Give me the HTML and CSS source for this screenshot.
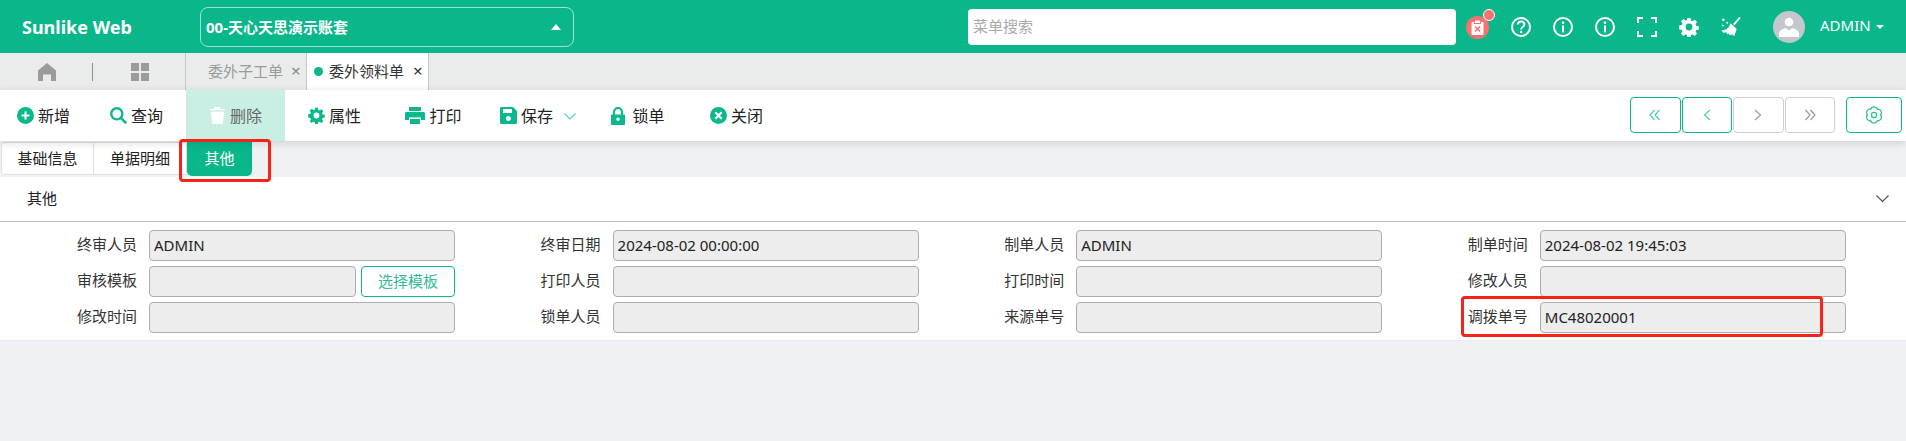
FILE: index.html
```html
<!DOCTYPE html>
<html>
<head>
<title>委外领料单</title>
<link rel="stylesheet" href="styles.css">
</head>
<body>

<svg class="sprite">
    <symbol id="cog" viewBox="0 0 20 20">
        <path d="M8.2 0h3.6l.5 2.9 1.6.7 2.5-1.7 2.5 2.6-1.6 2.4.7 1.7 2.9.5v3.6l-2.9.5-.7 1.7 1.6 2.4-2.5 2.6-2.5-1.7-1.6.7-.5 2.9H8.2l-.5-2.9-1.6-.7-2.5 1.7-2.5-2.6 1.6-2.4-.7-1.7-2.9-.5V8.3l2.9-.5.7-1.7-1.6-2.4 2.5-2.6 2.5 1.7 1.6-.7zM10 6.2a3.8 3.8 0 1 0 0 7.6 3.8 3.8 0 0 0 0-7.6z" fill-rule="evenodd" transform="translate(1 1) scale(.9)"/>
    </symbol>
    <symbol id="info" viewBox="0 0 20 20">
        <circle cx="10" cy="10" r="9" fill="none" stroke="#fff" stroke-width="2"/>
        <circle cx="10" cy="5.8" r="1.3" fill="#fff"/>
        <rect x="9" y="8.4" width="2" height="7" fill="#fff"/>
    </symbol>
</svg>

<div class="topbar">
    <div class="logo">Sunlike Web</div>
    <div class="accountSelect">
        <span>00-天心天思演示账套</span>
        <span class="upArrow"></span>
    </div>
    <div class="searchBox">菜单搜索</div>
    <div class="topIcons">
        <div class="alertIcon">
            <svg width="13" height="15" viewBox="0 0 13 15">
                <rect x="0.5" y="2" width="12" height="13" rx="1" fill="#fff"/>
                <rect x="3.5" y="0" width="6" height="3.5" fill="#fff" stroke="#f77170"/>
                <path d="M4 6.5l5 5M9 6.5l-5 5" stroke="#f77170" stroke-width="1.6"/>
            </svg>
            <span class="alertDot"></span>
        </div>
        <svg class="topIcon" viewBox="0 0 20 20">
            <circle cx="10" cy="10" r="9" fill="none" stroke="#fff" stroke-width="2"/>
            <path d="M6.8 7.6c0-4.2 6.6-4.2 6.6 0 0 2.5-3.3 2.4-3.3 4.8" fill="none" stroke="#fff" stroke-width="1.9"/>
            <circle cx="10.1" cy="15" r="1.2" fill="#fff"/>
        </svg>
        <svg class="topIcon"><use href="#info"/></svg>
        <svg class="topIcon"><use href="#info"/></svg>
        <svg class="topIcon" viewBox="0 0 20 20">
            <path d="M1 6V1h5M14 1h5v5M19 14v5h-5M6 19H1v-5" fill="none" stroke="#fff" stroke-width="2"/>
        </svg>
        <svg class="topIcon whiteFill"><use href="#cog"/></svg>
        <svg class="topIcon" viewBox="0 0 20 21">
            <path d="M19.5 0.5l-6.6 7.4" stroke="#fff" stroke-width="2"/>
            <path d="M9.5 6.5l6.5 6-2.5 7.5-3-2-1 1.5-2-2-1.5.5-1-2-3 .5-2-2.5 4-.5 3.5-2.5z" fill="#fff"/>
            <circle cx="2" cy="3" r="1.3" fill="#fff"/>
            <circle cx="6" cy="6" r="1" fill="#fff"/>
            <path d="M0 7.5l3 1.5-1.5 1.5z" fill="#fff"/>
        </svg>
    </div>
    <div class="avatar">
        <svg width="20" height="20" viewBox="0 0 20 20">
            <circle cx="10" cy="5" r="4.3" fill="#fff"/>
            <path d="M0 20v-3c0-4 4-5 6.5-6l3.5 2.5 3.5-2.5c2.5 1 6.500 2 6.500 6v3z" fill="#fff"/>
        </svg>
    </div>
    <div class="userName">ADMIN</div>
    <span class="downArrow"></span>
</div>

<div class="tabBar">
    <div class="tabTools">
        <svg width="18" height="18" viewBox="0 0 18 18">
            <path d="M9 0l9 7.5V18h-5v-6.5H5V18H0V7.5z" fill="#9b9b9b"/>
        </svg>
        <span class="tabDivider"></span>
        <svg width="18" height="18" viewBox="0 0 18 18">
            <path d="M0 0h8v8H0zM10 0h8v8h-8zM0 10h8v8H0zM10 10h8v8h-8z" fill="#9b9b9b"/>
        </svg>
    </div>
    <div class="pageTab">委外子工单<span class="tabClose">×</span></div>
    <div class="pageTab activeTab"><span class="tabDot"></span>委外领料单<span class="tabClose">×</span></div>
</div>

<div class="toolbar">
    <div class="toolBtn btnFirst">
        <svg class="toolIcon" viewBox="0 0 17 17">
            <circle cx="8.5" cy="8.5" r="8.5" fill="#09b98c"/>
            <path d="M8.5 4.500v8M4.500 8.5h8" stroke="#fff" stroke-width="2"/>
        </svg>新增
    </div>
    <div class="toolBtn">
        <svg class="toolIcon" viewBox="0 0 17 17">
            <circle cx="6.8" cy="6.8" r="5.6" fill="none" stroke="#09b98c" stroke-width="2.4"/>
            <path d="M10.8 10.8l5.4 5.4" stroke="#09b98c" stroke-width="2.6"/>
        </svg>查询
    </div>
    <div class="toolBtn disabledBtn">
        <svg class="toolIcon" viewBox="0 0 17 18">
            <path d="M5 0h6l1 2h4v1.5H1V2h4zM1.5 5h14l-1.300 12c0 .6-.5 1-1 1H3.800c-.5 0-1-.4-1-1z" fill="#fff"/>
        </svg>删除
    </div>
    <div class="toolBtn">
        <svg class="toolIcon greenFill"><use href="#cog"/></svg>属性
    </div>
    <div class="toolBtn">
        <svg class="toolIcon wideIcon" viewBox="0 0 20 17">
            <path d="M4 0h12v4H4zM1.5 5h17c.8 0 1.5.7 1.5 1.5V13h-4v-2.5H4V13H0V6.5C0 5.7.7 5 1.5 5zM5 12h10v5H5z" fill="#09b98c"/>
        </svg>打印
    </div>
    <div class="toolBtn saveBtn">
        <svg class="toolIcon" viewBox="0 0 17 17">
            <path d="M1.5 0H13l4 4v11.5c0 .8-.7 1.5-1.5 1.5h-14C.7 17 0 16.300 0 15.5v-14C0 .7.7 0 1.5 0zM3 2v4h9V2zm5.5 7a2.5 2.5 0 1 0 0 5 2.5 2.5 0 0 0 0-5z" fill="#09b98c" fill-rule="evenodd"/>
        </svg>保存
        <svg class="saveChevron" width="12" height="7" viewBox="0 0 12 7">
            <path d="M.5.5L6 6l5.5-5.5" fill="none" stroke="#5fcfb3" stroke-width="1.2"/>
        </svg>
    </div>
    <div class="toolBtn lockBtn">
        <svg class="toolIcon lockIcon" viewBox="0 0 14 18">
            <path d="M3 8V5a4 4 0 0 1 8 0v3" fill="none" stroke="#09b98c" stroke-width="2.2"/>
            <path d="M1 7.5h12c.6 0 1 .4 1 1V17c0 .6-.4 1-1 1H1c-.6 0-1-.4-1-1V8.5c0-.6.4-1 1-1zM7 10.500a1.8 1.8 0 1 0 0 3.600 1.8 1.8 0 0 0 0-3.600z" fill="#09b98c" fill-rule="evenodd"/>
        </svg>锁单
    </div>
    <div class="toolBtn closeBtn">
        <svg class="toolIcon" viewBox="0 0 17 17">
            <circle cx="8.5" cy="8.5" r="8.5" fill="#09b98c"/>
            <path d="M5.3 5.3l6.4 6.4M11.7 5.3l-6.4 6.4" stroke="#fff" stroke-width="2.2"/>
        </svg>关闭
    </div>

    <div class="pager">
        <div class="pageBtn pageOn">
            <svg width="12" height="12" viewBox="0 0 12 12"><path d="M5.5 1L1 6l4.5 5M10.5 1L6 6l4.5 5" fill="none" stroke="#4fcbac" stroke-width="1.2"/></svg>
        </div>
        <div class="pageBtn pageOn">
            <svg width="8" height="12" viewBox="0 0 8 12"><path d="M7 1L1.5 6 7 11" fill="none" stroke="#4fcbac" stroke-width="1.2"/></svg>
        </div>
        <div class="pageBtn">
            <svg width="8" height="12" viewBox="0 0 8 12"><path d="M1 1l5.5 5L1 11" fill="none" stroke="#9a9a9a" stroke-width="1.2"/></svg>
        </div>
        <div class="pageBtn">
            <svg width="12" height="12" viewBox="0 0 12 12"><path d="M1.5 1L6 6l-4.5 5M6.5 1L11 6l-4.5 5" fill="none" stroke="#9a9a9a" stroke-width="1.2"/></svg>
        </div>
    </div>
    <div class="pageBtn pageOn settingBtn">
        <svg width="18" height="18" viewBox="0 0 18 18">
            <path d="M5.7 3.28A3.5 3.5 0 0 1 12.3 3.28A3.5 3.5 0 0 1 15.6 9A3.5 3.5 0 0 1 12.3 14.72A3.5 3.5 0 0 1 5.7 14.72A3.5 3.5 0 0 1 2.4 9A3.5 3.5 0 0 1 5.7 3.28Z" fill="none" stroke="#2cc09b" stroke-width="1.3" stroke-linejoin="round"/>
            <circle cx="9" cy="9" r="2.6" fill="none" stroke="#2cc09b" stroke-width="1.3"/>
        </svg>
    </div>
</div>

<div class="subTabs">
    <div class="subTab">基础信息</div>
    <div class="subTab">单据明细</div>
    <div class="subTab subTabOn">其他</div>
</div>

<div class="sectionHead">
    <div class="sectionName">其他</div>
    <svg width="13" height="8" viewBox="0 0 13 8"><path d="M.5.5l6 6 6-6" fill="none" stroke="#555" stroke-width="1.2"/></svg>
</div>

<div class="formGrid">
    <div class="field"><div class="fieldLabel">终审人员</div><div class="fieldValue">ADMIN</div></div>
    <div class="field"><div class="fieldLabel">终审日期</div><div class="fieldValue">2024-08-02 00:00:00</div></div>
    <div class="field"><div class="fieldLabel">制单人员</div><div class="fieldValue">ADMIN</div></div>
    <div class="field"><div class="fieldLabel">制单时间</div><div class="fieldValue">2024-08-02 19:45:03</div></div>

    <div class="field"><div class="fieldLabel">审核模板</div><div class="fieldValue shortValue"></div><div class="pickBtn">选择模板</div></div>
    <div class="field"><div class="fieldLabel">打印人员</div><div class="fieldValue"></div></div>
    <div class="field"><div class="fieldLabel">打印时间</div><div class="fieldValue"></div></div>
    <div class="field"><div class="fieldLabel">修改人员</div><div class="fieldValue"></div></div>

    <div class="field"><div class="fieldLabel">修改时间</div><div class="fieldValue"></div></div>
    <div class="field"><div class="fieldLabel">锁单人员</div><div class="fieldValue"></div></div>
    <div class="field"><div class="fieldLabel">来源单号</div><div class="fieldValue"></div></div>
    <div class="field"><div class="fieldLabel">调拨单号</div><div class="fieldValue">MC48020001</div></div>
</div>

<div class="redMark markTab"></div>
<div class="redMark markField"></div>

</body>
</html>
```

FILE: styles.css
```css
body{
    margin:0;
    height:441px;
    overflow:hidden;
    position:relative;
    font-family:"Noto Sans","Noto Sans CJK SC",sans-serif;
    font-size:15px;
    color:#222;
    background:#f0f1f5;
}
.sprite{
    width:0;
    height:0;
    position:absolute;
}
.topbar{
    height:53px;
    background:#09b78b;
    display:flex;
    align-items:center;
    color:white;
}
.logo{
    width:200px;
    padding-left:22px;
    box-sizing:border-box;
    font-size:18px;
    font-weight:bold;
}
.accountSelect{
    width:374px;
    height:40px;
    border:1px solid rgba(255,255,255,0.6);
    border-radius:8px;
    box-sizing:border-box;
    display:flex;
    align-items:center;
    justify-content:space-between;
    padding:0 12px 0 5px;
    font-size:15px;
    font-weight:bold;
}
.upArrow{
    width:0;
    height:0;
    border-left:5px solid transparent;
    border-right:5px solid transparent;
    border-bottom:6px solid white;
}
.searchBox{
    width:488px;
    height:36px;
    margin-left:394px;
    background:white;
    border-radius:4px;
    display:flex;
    align-items:center;
    padding:0 0 2px 5px;
    box-sizing:border-box;
    color:#aaa;
    font-size:15px;
}
.topIcons{
    display:flex;
    align-items:center;
    gap:22px;
    margin-left:10px;
}
.alertIcon{
    width:23px;
    height:23px;
    border-radius:50%;
    background:#f77170;
    display:flex;
    align-items:center;
    justify-content:center;
    position:relative;
    margin-top:1px;
}
.alertDot{
    position:absolute;
    top:-7px;
    right:-6px;
    width:10px;
    height:10px;
    border-radius:50%;
    background:#f77170;
    border:1px solid white;
}
.topIcon{
    width:20px;
    height:20px;
}
.whiteFill{
    fill:white;
}
.avatar{
    width:32px;
    height:32px;
    margin-left:32px;
    border-radius:50%;
    background:#c4c7cf;
    display:flex;
    align-items:center;
    justify-content:center;
    overflow:hidden;
}
.userName{
    margin-left:15px;
    padding-bottom:3px;
    font-size:15px;
}
.downArrow{
    margin-left:5px;
    width:0;
    height:0;
    border-left:4px solid transparent;
    border-right:4px solid transparent;
    border-top:4px solid white;
}
.tabBar{
    height:37px;
    background:#e9ecea;
    display:flex;
}
.tabTools{
    width:186px;
    box-sizing:border-box;
    display:flex;
    align-items:center;
    padding-left:38px;
    border-right:1px solid #c6c8c8;
}
.tabDivider{
    width:1px;
    height:18px;
    background:#8f8f8f;
    margin:0 38px 0 36px;
}
.pageTab{
    width:121px;
    box-sizing:border-box;
    display:flex;
    align-items:center;
    padding:0 0 2px 22px;
    color:#9a9a9a;
    font-size:15px;
    border-right:1px solid #c6c8c8;
}
.tabClose{
    margin-left:8px;
    font-size:17px;
    color:#888;
}
.activeTab{
    width:122px;
    background:white;
    color:#333;
    padding-left:7px;
}
.activeTab .tabClose{
    color:#333;
    margin-left:9px;
}
.tabDot{
    width:9px;
    height:9px;
    border-radius:50%;
    background:#09b78b;
    margin:2px 6px 0 0;
}
.toolbar{
    height:51px;
    background:white;
    display:flex;
    align-items:stretch;
    position:relative;
    z-index:2;
    box-shadow:0 2px 8px rgba(0,0,0,0.14);
    font-size:16px;
}
.toolBtn{
    width:99px;
    display:flex;
    align-items:center;
    justify-content:center;
    gap:4px;
    padding-bottom:2px;
    box-sizing:border-box;
    color:#222;
}
.btnFirst{
    width:87px;
}
.saveBtn{
    width:110px;
}
.lockBtn{
    width:90px;
}
.closeBtn{
    width:107px;
}
.disabledBtn{
    background:#c9efe5;
    color:#666;
}
.toolIcon{
    width:17px;
    height:17px;
    flex:none;
    margin-top:2px;
}
.wideIcon{
    width:20px;
}
.lockIcon{
    width:14px;
    height:18px;
    margin-right:3px;
}
.greenFill{
    fill:#09b98c;
}
.saveChevron{
    margin:4px 0 0 7px;
}
.pager{
    width:205px;
    display:flex;
    gap:1px;
    margin:7px 0 7px auto;
}
.pageBtn{
    flex:1;
    height:36px;
    box-sizing:border-box;
    border:1px solid #cfcfcf;
    border-radius:4px;
    display:flex;
    align-items:center;
    justify-content:center;
}
.pageOn{
    border-color:#09b78b;
}
.settingBtn{
    flex:none;
    width:56px;
    margin:7px 4px 7px 11px;
}
.subTabs{
    height:36px;
    display:flex;
    align-items:flex-start;
    padding:1px 0 0 1px;
    box-sizing:border-box;
}
.subTab{
    width:93px;
    height:33px;
    box-sizing:border-box;
    background:white;
    border:1px solid #dedfe3;
    border-left:none;
    display:flex;
    align-items:center;
    justify-content:center;
    padding-bottom:3px;
    font-size:15px;
}
.subTab:first-child{
    border-left:1px solid #dedfe3;
    border-radius:4px 0 0 4px;
}
.subTabOn{
    width:65px;
    height:34px;
    background:#09b78b;
    border:none;
    border-radius:0 0 5px 5px;
    color:white;
}
.sectionHead{
    height:45px;
    background:white;
    border-bottom:1px solid #bbb;
    box-sizing:border-box;
    display:flex;
    align-items:center;
    justify-content:space-between;
    padding:0 17px 0 27px;
    font-size:15px;
}
.sectionName{
    padding-bottom:4px;
}
.formGrid{
    height:119px;
    background:white;
    border-bottom:1px solid #eaebef;
    box-sizing:border-box;
    padding:8px 0 0 19px;
    display:grid;
    grid-template-columns:repeat(4, 463.6px);
    grid-auto-rows:31px;
    row-gap:5px;
}
.field{
    display:flex;
    align-items:center;
}
.fieldLabel{
    width:118px;
    margin-right:12px;
    padding-bottom:4px;
    text-align:right;
    font-size:15px;
    color:#333;
}
.fieldValue{
    width:306px;
    height:31px;
    box-sizing:border-box;
    background:#ecedec;
    border:1px solid #adadad;
    border-radius:4px;
    padding:0 0 2px 4px;
    display:flex;
    align-items:center;
    font-size:15px;
    color:#222;
}
.shortValue{
    width:207px;
}
.pickBtn{
    width:94px;
    height:31px;
    margin-left:5px;
    box-sizing:border-box;
    border:1px solid #09b78b;
    border-radius:4px;
    display:flex;
    align-items:center;
    justify-content:center;
    padding-bottom:2px;
    color:#35b999;
    font-size:15px;
}
.redMark{
    position:absolute;
    z-index:3;
    box-sizing:border-box;
    border:3px solid #fa2116;
    border-radius:4px;
}
.markTab{
    left:179px;
    top:139px;
    width:92px;
    height:43px;
}
.markField{
    left:1461px;
    top:296px;
    width:362px;
    height:41px;
}
```
